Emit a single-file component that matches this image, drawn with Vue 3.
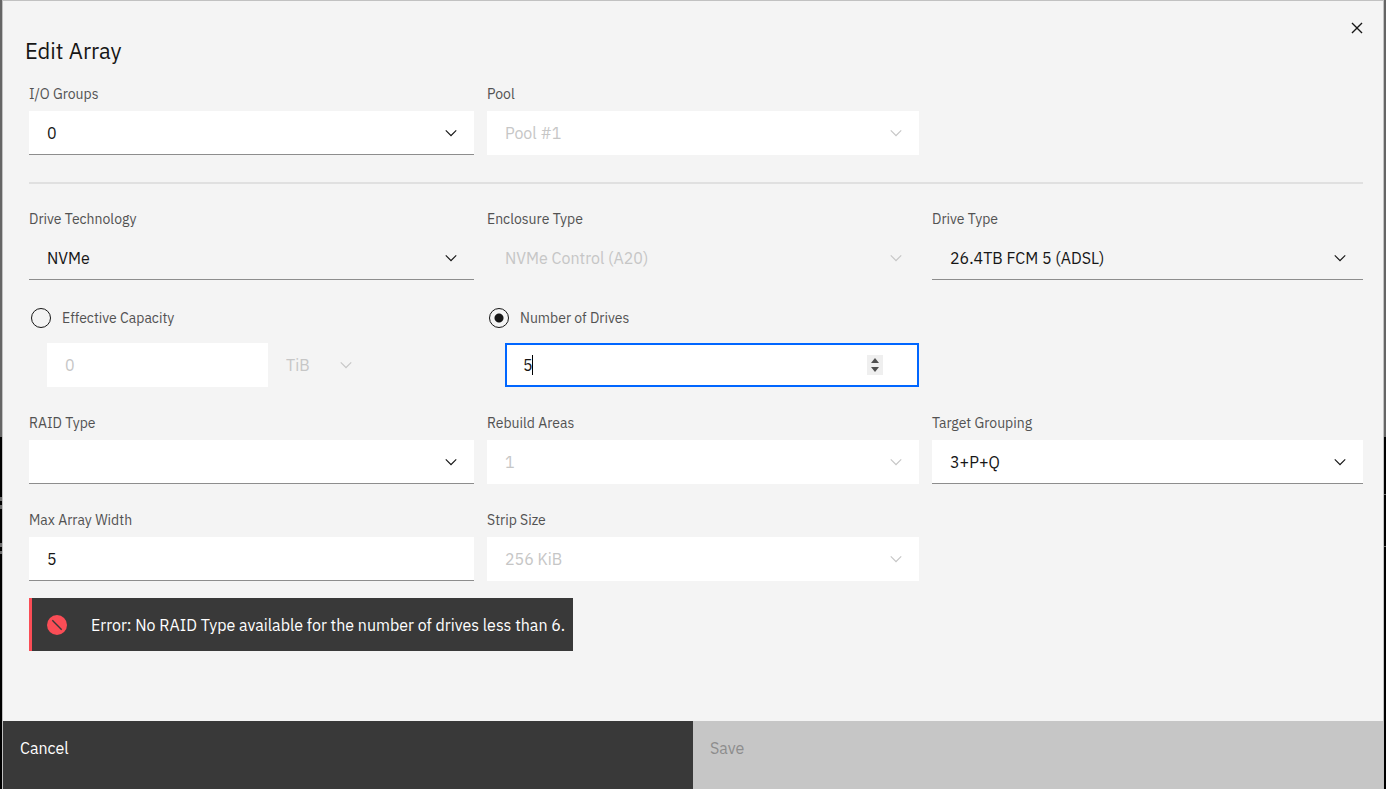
<script setup>
import { ref } from 'vue'

const mode = ref('drives')

const topFields = [
  { id: 'io-groups', label: 'I/O Groups', value: '0' },
  { id: 'pool', label: 'Pool', value: 'Pool #1', disabled: true },
]

const driveFields = [
  { id: 'technology', label: 'Drive Technology', value: 'NVMe', plain: true },
  { id: 'enclosure', label: 'Enclosure Type', value: 'NVMe Control (A20)', plain: true, disabled: true },
  { id: 'drive-type', label: 'Drive Type', value: '26.4TB FCM 5 (ADSL)', plain: true },
]

const raidFields = [
  { id: 'raid-type', label: 'RAID Type', value: '' },
  { id: 'rebuild', label: 'Rebuild Areas', value: '1', disabled: true },
  { id: 'grouping', label: 'Target Grouping', value: '3+P+Q' },
]

const capacity = ref(0)
const drives = ref(5)
const arrayWidth = ref(5)
</script>

<template>
  <div class="backdrop">
    <form class="dialog" role="dialog" aria-labelledby="dialog-title" @submit.prevent>
      <button class="close" type="button" aria-label="Close">
        <svg viewBox="0 0 32 32" aria-hidden="true">
          <path d="M24 9.4 22.6 8 16 14.6 9.4 8 8 9.4 14.6 16 8 22.6 9.4 24 16 17.4 22.6 24 24 22.6 17.4 16z" />
        </svg>
      </button>
      <h1 id="dialog-title">Edit Array</h1>

      <div class="content">
        <div class="row">
          <div v-for="f in topFields" :key="f.id" class="field">
            <label :for="f.id">{{ f.label }}</label>
            <div class="control" :class="{ disabled: f.disabled }">
              <select :id="f.id" :disabled="f.disabled"><option>{{ f.value }}</option></select>
              <svg class="chevron" viewBox="0 0 16 16" aria-hidden="true"><path d="M8 11 3 6l.7-.7L8 9.6l4.3-4.3.7.7z" /></svg>
            </div>
          </div>
        </div>

        <hr />

        <div class="row">
          <div v-for="f in driveFields" :key="f.id" class="field">
            <label :for="f.id">{{ f.label }}</label>
            <div class="control plain" :class="{ disabled: f.disabled }">
              <select :id="f.id" :disabled="f.disabled"><option>{{ f.value }}</option></select>
              <svg class="chevron" viewBox="0 0 16 16" aria-hidden="true"><path d="M8 11 3 6l.7-.7L8 9.6l4.3-4.3.7.7z" /></svg>
            </div>
          </div>
        </div>

        <div class="row sizing">
          <div class="option">
            <div class="choice">
              <input id="by-capacity" v-model="mode" type="radio" name="mode" value="capacity" />
              <label for="by-capacity">Effective Capacity</label>
            </div>
            <div class="capacity">
              <div class="control amount disabled">
                <input v-model="capacity" type="number" aria-label="Effective capacity" disabled />
              </div>
              <div class="control unit plain disabled">
                <select aria-label="Capacity unit" disabled><option>TiB</option></select>
                <svg class="chevron" viewBox="0 0 16 16" aria-hidden="true"><path d="M8 11 3 6l.7-.7L8 9.6l4.3-4.3.7.7z" /></svg>
              </div>
            </div>
          </div>
          <div class="option">
            <div class="choice">
              <input id="by-drives" v-model="mode" type="radio" name="mode" value="drives" />
              <label for="by-drives">Number of Drives</label>
            </div>
            <div class="control active">
              <input v-model="drives" type="number" aria-label="Number of drives" />
              <span class="caret"></span>
              <svg class="spinner" viewBox="0 0 16 20" aria-hidden="true">
                <rect width="16" height="20" fill="#efefef" />
                <path d="M8 3 12 8H4zM8 17 4 12h8z" fill="#505050" />
              </svg>
            </div>
          </div>
        </div>

        <div class="row">
          <div v-for="f in raidFields" :key="f.id" class="field">
            <label :for="f.id">{{ f.label }}</label>
            <div class="control" :class="{ disabled: f.disabled }">
              <select :id="f.id" :disabled="f.disabled"><option>{{ f.value }}</option></select>
              <svg class="chevron" viewBox="0 0 16 16" aria-hidden="true"><path d="M8 11 3 6l.7-.7L8 9.6l4.3-4.3.7.7z" /></svg>
            </div>
          </div>
        </div>

        <div class="row last">
          <div class="field">
            <label for="array-width">Max Array Width</label>
            <div class="control"><input id="array-width" v-model="arrayWidth" type="number" /></div>
          </div>
          <div class="field">
            <label for="strip">Strip Size</label>
            <div class="control disabled">
              <select id="strip" disabled><option>256 KiB</option></select>
              <svg class="chevron" viewBox="0 0 16 16" aria-hidden="true"><path d="M8 11 3 6l.7-.7L8 9.6l4.3-4.3.7.7z" /></svg>
            </div>
          </div>
        </div>

        <div class="error" role="alert">
          <svg viewBox="0 0 20 20" aria-hidden="true">
            <circle cx="10" cy="10" r="10" fill="#fa4d56" />
            <path d="m5.3 5.3 9.4 9.4" stroke="#393939" stroke-width="1.4" />
          </svg>
          <span>Error: No RAID Type available for the number of drives less than 6.</span>
        </div>
      </div>

      <footer>
        <button class="cancel" type="button">Cancel</button>
        <button class="save" type="submit" disabled>Save</button>
      </footer>
    </form>
  </div>
</template>

<style>
body {
  margin: 0;
}
</style>

<style scoped>
.backdrop,
.backdrop * {
  box-sizing: border-box;
}
.backdrop {
  display: flex;
  min-height: 100vh;
  padding: 0 2px;
  background:
    linear-gradient(
      transparent 497px, #6a6a6a 497px 501px, transparent 501px 505px, #6a6a6a 505px 509px,
      transparent 509px 543px, #6a6a6a 543px 547px, transparent 547px 551px, #6a6a6a 551px 554px,
      transparent 554px
    ) left top / 2px 100% no-repeat,
    linear-gradient(
      transparent 494px, #6a6a6a 494px 495px, transparent 495px 546px, #6a6a6a 546px 547px,
      transparent 547px
    ) right top / 2px 100% no-repeat,
    linear-gradient(#656565 437px, #000 437px);
  color: #161616;
  font-family: "IBM Plex Sans", Inter, "Liberation Sans", sans-serif;
  font-size: 16px;
}
.dialog {
  position: relative;
  display: flex;
  flex: 1;
  flex-direction: column;
  min-width: 0;
  border: 1px solid #c1c1c1;
  border-bottom: 0;
  background: #f4f4f4;
}
.close {
  position: absolute;
  top: 16px;
  right: 15px;
  width: 22px;
  height: 22px;
  padding: 0;
  border: 0;
  background: none;
}
.close svg {
  display: block;
  fill: #161616;
}
h1 {
  margin: 35px 22px 0;
  font-size: 22px;
  font-weight: 400;
  line-height: 30px;
}
.content {
  flex: 1;
  padding: 19px 20px 24px 26px;
}
.row {
  display: grid;
  grid-template-columns: 445fr 432fr 431fr;
  gap: 13px;
  margin-bottom: 27px;
}
.row.sizing {
  margin-top: 28px;
}
.row.last {
  margin-bottom: 17px;
}
hr {
  height: 2px;
  margin: 0 0 26px;
  border: 0;
  background: #e0e0e0;
}
label {
  color: #525252;
  font-size: 14px;
  line-height: 18px;
}
.field label {
  display: block;
  margin-bottom: 8px;
}
.control {
  position: relative;
  height: 44px;
  border-bottom: 1px solid #8d8d8d;
  background: #fff;
}
.control.plain {
  background: transparent;
}
.control.disabled {
  border-bottom-color: transparent;
}
.control select,
.control input {
  display: block;
  width: 100%;
  height: 100%;
  margin: 0;
  padding: 0 18px;
  border: 0;
  border-radius: 0;
  outline: 0;
  appearance: none;
  background: transparent;
  color: #161616;
  font: inherit;
  opacity: 1;
}
.control input {
  appearance: textfield;
}
.control input::-webkit-inner-spin-button {
  appearance: none;
  margin: 0;
}
.control.disabled select,
.control.disabled input {
  color: #c6c6c6;
}
.chevron {
  position: absolute;
  top: 13px;
  right: 14px;
  width: 18px;
  height: 18px;
  fill: #161616;
  pointer-events: none;
}
.disabled .chevron {
  fill: #c6c6c6;
}
.choice {
  display: flex;
  align-items: center;
  height: 20px;
  margin: 0 0 15px 2px;
}
.choice input {
  width: 20px;
  height: 20px;
  margin: 0 11px 0 0;
  border: 1px solid #161616;
  border-radius: 50%;
  appearance: none;
}
.choice input:checked {
  background: radial-gradient(circle, #161616 4px, transparent 5px);
}
.capacity {
  display: flex;
  margin-left: 18px;
}
.amount {
  flex: 0 1 221px;
}
.unit {
  width: 101px;
}
.active {
  margin-left: 18px;
  border: 2px solid #0066ff;
}
.control.active input {
  padding: 0 16px;
}
.caret {
  position: absolute;
  top: 10px;
  left: 25px;
  width: 1px;
  height: 20px;
  background: #000;
}
.spinner {
  position: absolute;
  top: 10px;
  right: 34px;
  width: 16px;
  height: 20px;
}
.error {
  display: flex;
  align-items: center;
  gap: 24px;
  width: fit-content;
  min-height: 53px;
  padding: 0 8px 0 15px;
  border-left: 3px solid #fa4d56;
  background: #393939;
  color: #fff;
}
.error svg {
  flex: none;
  width: 20px;
  height: 20px;
}
footer {
  display: flex;
  height: 68px;
}
footer button {
  display: flex;
  flex: 1;
  align-items: flex-start;
  padding: 18px 17px;
  border: 0;
  font: inherit;
  line-height: 18px;
  text-align: left;
}
.cancel {
  background: #393939;
  color: #fff;
}
.save {
  background: #c6c6c6;
  color: #8d8d8d;
}
</style>
